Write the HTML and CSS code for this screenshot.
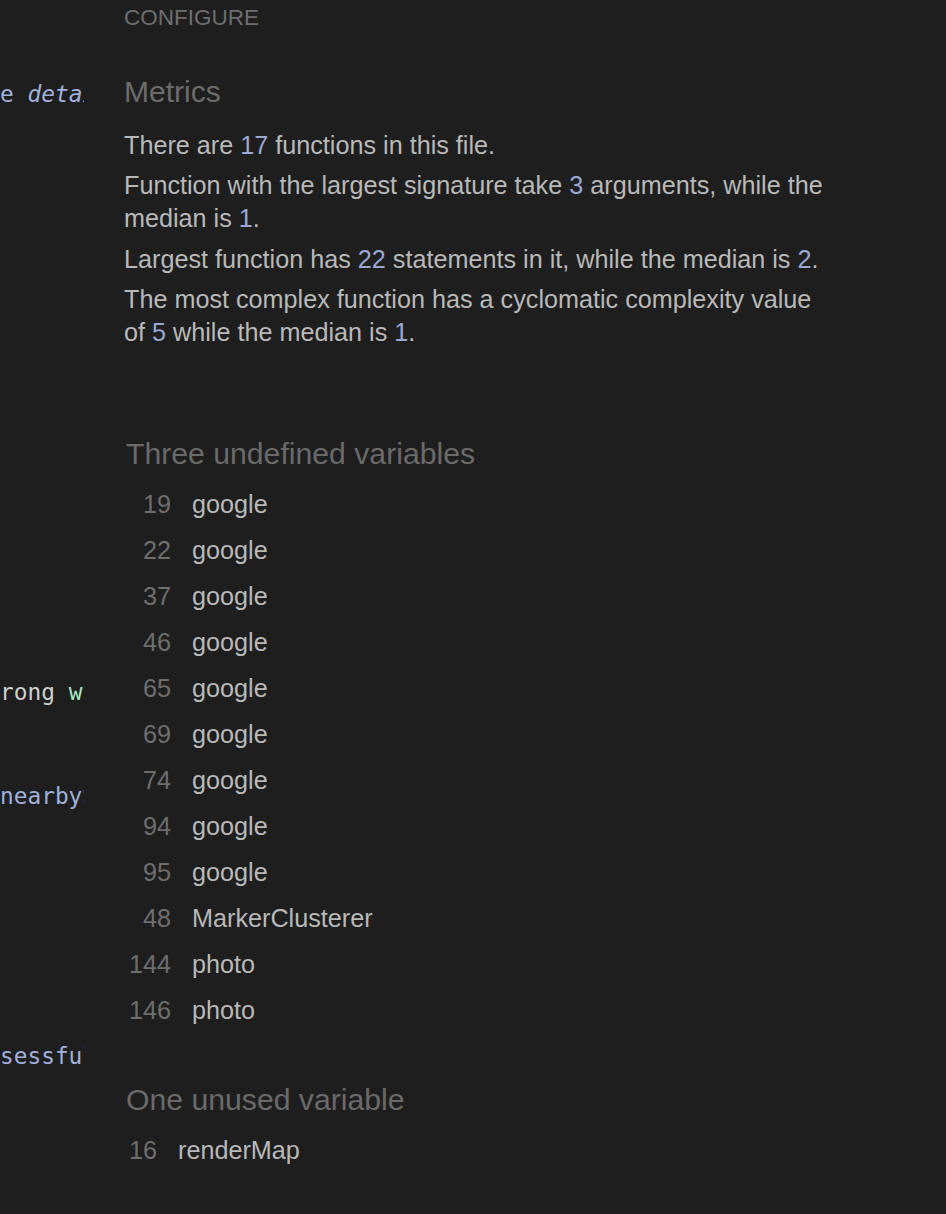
FILE: index.html
```html
<!DOCTYPE html>
<html lang="en">
<head>
<meta charset="utf-8">
<title>Configure – Metrics</title>
<link rel="stylesheet" href="styles.css">
</head>
<body>
<div class="layout">
  <pre class="code"><span class="c-blue">e <i>detai</i></span>
1
2
3
4
5
6
7
8
9
10
11
12
13
14
15
16
17
18
19
20
21
22
<span class="c-plain">rong </span><span class="c-green">wi</span>
1
2
3
<span class="c-blue">nearbyS</span>
1
2
3
4
5
6
7
8
9
<span class="c-blue">sessful</span></pre>
  <main class="panel">
    <div class="eyebrow">CONFIGURE</div>
    <h2 class="title">Metrics</h2>
    <p class="stat">There are <span class="num">17</span> functions in this file.</p>
    <p class="stat">Function with the largest signature take <span class="num">3</span> arguments, while the median is <span class="num">1</span>.</p>
    <p class="stat">Largest function has <span class="num">22</span> statements in it, while the median is <span class="num">2</span>.</p>
    <p class="stat">The most complex function has a cyclomatic complexity value of <span class="num">5</span> while the median is <span class="num">1</span>.</p>

    <h3 class="subtitle first">Three undefined variables</h3>
    <div class="vars">
      <span class="ln">19</span><span class="name">google</span>
      <span class="ln">22</span><span class="name">google</span>
      <span class="ln">37</span><span class="name">google</span>
      <span class="ln">46</span><span class="name">google</span>
      <span class="ln">65</span><span class="name">google</span>
      <span class="ln">69</span><span class="name">google</span>
      <span class="ln">74</span><span class="name">google</span>
      <span class="ln">94</span><span class="name">google</span>
      <span class="ln">95</span><span class="name">google</span>
      <span class="ln">48</span><span class="name">MarkerClusterer</span>
      <span class="ln">144</span><span class="name">photo</span>
      <span class="ln">146</span><span class="name">photo</span>
    </div>

    <h3 class="subtitle">One unused variable</h3>
    <div class="vars">
      <span class="ln">16</span><span class="name">renderMap</span>
    </div>
  </main>
</div>
</body>
</html>
```

FILE: styles.css
```css
html, body {
  margin: 0;
  padding: 0;
  background: #1e1e1e;
}

body {
  font-family: "Liberation Sans", Arial, Helvetica, sans-serif;
  color: #b9b9b9;
  height: 1214px;
  overflow: hidden;
}

.layout {
  display: flex;
  align-items: flex-start;
}

/* clipped code pane on the left; placeholder lines are invisible */
.code {
  flex: 0 0 84px;
  width: 84px;
  overflow: hidden;
  margin: 0;
  padding-top: 81px;
  font-family: "DejaVu Sans Mono", "Liberation Mono", monospace;
  font-size: 22.8px;
  line-height: 26px;
  white-space: pre;
  color: transparent;
}

.code i {
  font-style: italic;
}

.c-blue { color: #a1b1dc; }
.c-plain { color: #d0d0d0; }
.c-green { color: #a6e8c2; }

.panel {
  margin-left: 40px;
  padding-top: 5px;
  flex: 1 1 auto;
}

.eyebrow {
  font-size: 22.5px;
  line-height: 26px;
  color: #6e6e6e;
}

.title {
  margin: 43px 0 0;
  font-size: 30px;
  line-height: 36px;
  font-weight: normal;
  color: #6c6c6c;
}

.stat {
  margin: 7.5px 0 0;
  font-size: 25.2px;
  line-height: 33px;
  width: 706px;
  color: #b9b9b9;
}

.title + .stat {
  margin-top: 18.5px;
}

.num {
  color: #9aa9d4;
}

.subtitle {
  margin: 49px 0 0 2px;
  font-size: 30.2px;
  line-height: 36px;
  font-weight: normal;
  color: #6a6a6a;
}

.subtitle.first {
  margin-top: 87px;
}

.vars {
  display: grid;
  grid-template-columns: auto auto;
  justify-content: start;
  column-gap: 21px;
  margin-top: 9px;
  padding-left: 5px;
  font-size: 25.2px;
  line-height: 46px;
}

.ln {
  text-align: right;
  color: #6e6e6e;
}

.name {
  color: #b9b9b9;
}
```
